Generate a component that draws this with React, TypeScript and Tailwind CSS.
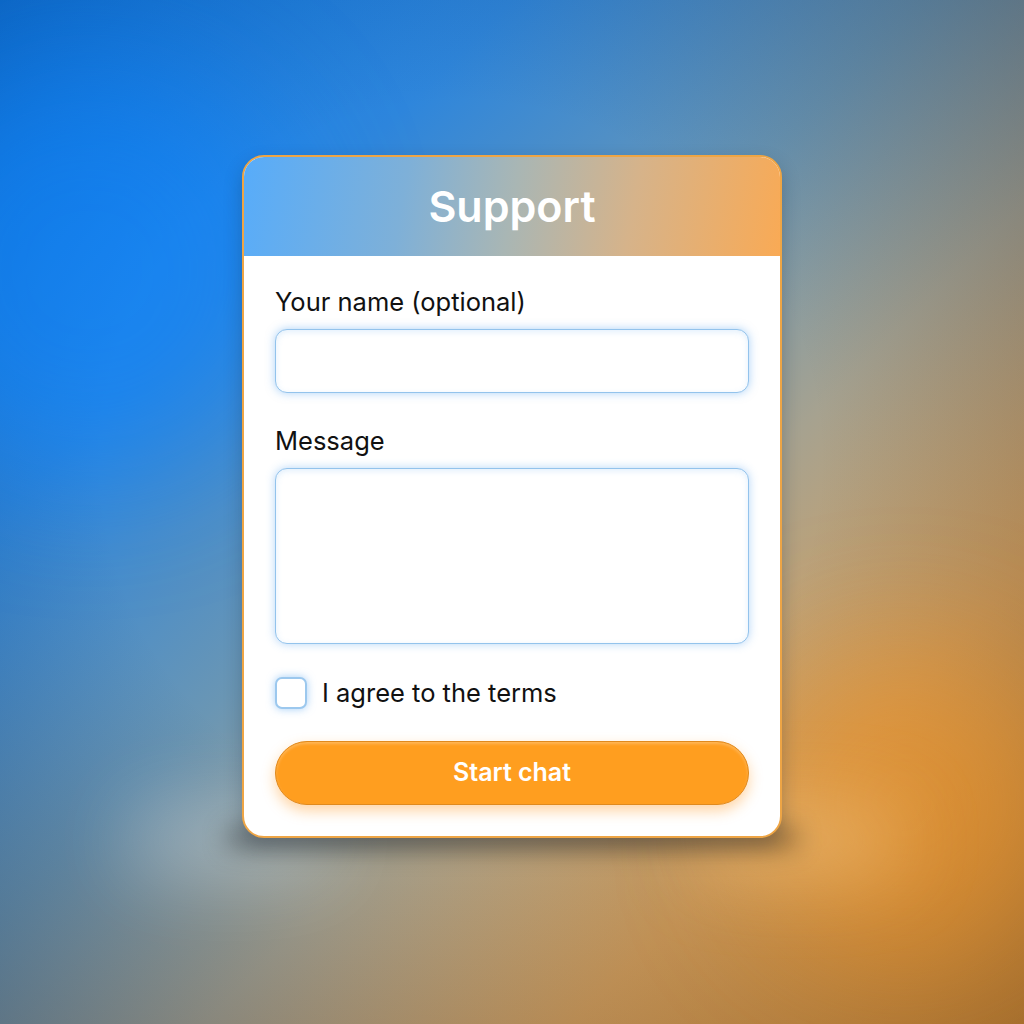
import { useState } from "react";

export default function App() {
  const [agree, setAgree] = useState(false);

  return (
    <div
      className="relative min-h-screen w-full overflow-hidden bg-[linear-gradient(135deg,#0a7cf0_0%,#2e86dc_25%,#6a96b4_45%,#a6a290_60%,#d9a15a_78%,#f39a2c_100%)]"
      style={{ fontFamily: "Inter, 'Noto Sans', sans-serif" }}
    >
      {/* Background vignette and glows */}
      <div className="pointer-events-none absolute inset-0">
        <div className="absolute inset-0 bg-[radial-gradient(ellipse_at_45%_45%,transparent_45%,rgba(20,30,50,0.35)_100%)]" />
        <div className="absolute left-[-120px] top-[60px] h-[420px] w-[420px] rounded-full bg-[#0a84ff]/50 blur-3xl" />
        <div className="absolute bottom-[60px] right-[-40px] h-[320px] w-[320px] rounded-full bg-[#ff9a20]/45 blur-3xl" />
        <div className="absolute left-[130px] top-[810px] h-[60px] w-[200px] rounded-full bg-white/35 blur-2xl" />
        <div className="absolute left-[700px] top-[810px] h-[60px] w-[200px] rounded-full bg-[#ffe0a8]/40 blur-2xl" />
        <div className="absolute left-[225px] top-[826px] h-[24px] w-[574px] rounded-full bg-black/30 blur-md" />
      </div>

      <div className="relative flex justify-center pt-[155px]">
        <div className="w-[540px] overflow-hidden rounded-[22px] border-2 border-[#eea545] bg-white shadow-[0_8px_18px_rgba(20,30,50,0.25)]">
          <div className="flex h-[99px] items-center justify-center bg-[linear-gradient(100deg,#57acfa_0%,#7eb0d8_30%,#a9b6b4_50%,#d6b38a_72%,#f9aa55_100%)]">
            <h1 className="text-[43px] font-semibold leading-none text-white">Support</h1>
          </div>

          <div className="px-[31px] pb-[31px] pt-[31px]">
            <label className="block text-[25.5px] leading-[30px] text-[#111111]">Your name (optional)</label>
            <input
              type="text"
              className="mt-3 block h-[64px] w-full rounded-[12px] border border-[#93c3ec] bg-white px-4 text-[22px] shadow-[0_0_10px_rgba(90,165,240,0.5),inset_0_2px_6px_rgba(90,165,240,0.18)] outline-none"
            />

            <label className="mt-[33px] block text-[25.5px] leading-[30px] text-[#111111]">Message</label>
            <textarea className="mt-3 block h-[176px] w-full resize-none rounded-[12px] border border-[#93c3ec] bg-white px-4 py-3 text-[22px] shadow-[0_0_10px_rgba(90,165,240,0.45),inset_0_2px_6px_rgba(90,165,240,0.18)] outline-none" />

            <label className="mt-[33px] flex cursor-pointer items-center gap-[15px]">
              <input
                type="checkbox"
                checked={agree}
                onChange={(e) => setAgree(e.target.checked)}
                className="h-[32px] w-[32px] shrink-0 appearance-none rounded-[7px] border-2 border-[#9cc8ee] bg-white shadow-[0_0_8px_rgba(90,165,240,0.55)] checked:bg-[#57acfa]"
              />
              <span className="text-[25.5px] leading-[30px] text-[#111111]">I agree to the terms</span>
            </label>

            <button className="mt-[32px] flex h-[64px] w-full items-center justify-center rounded-full border border-[#e08a1e] bg-[#ff9e1f] text-[25px] font-semibold text-white shadow-[0_6px_14px_rgba(255,150,30,0.4),inset_0_2px_3px_rgba(255,255,255,0.25)]">
              Start chat
            </button>
          </div>
        </div>
      </div>
    </div>
  );
}
